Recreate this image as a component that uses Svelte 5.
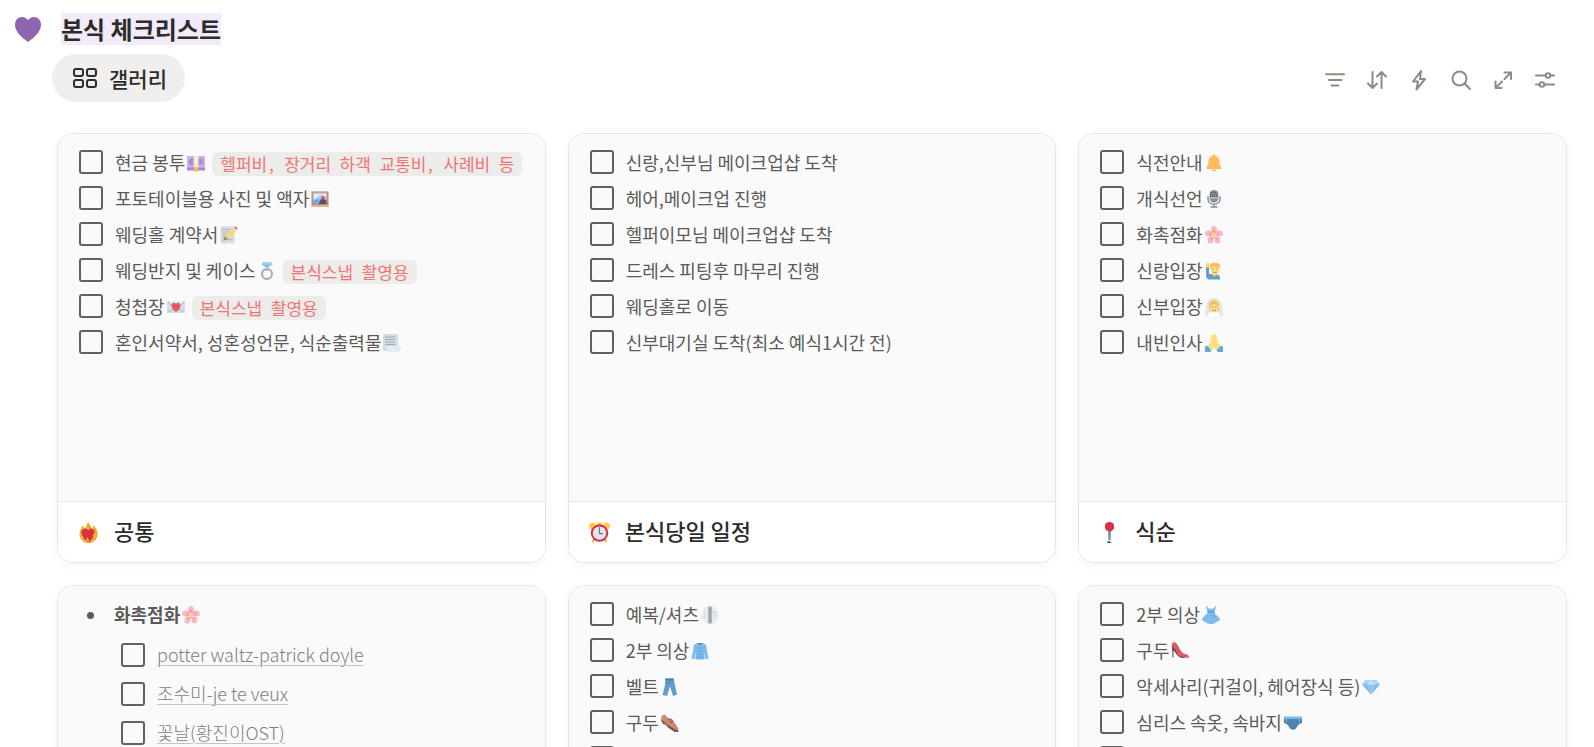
<script>
  const art = {
    pound: `<rect x="0" y="5" width="36" height="28" rx="1" fill="#9266cc"/><rect x="0" y="4" width="36" height="23" fill="#c1a3e6"/><path d="M3 7h30v17H3z" fill="#b894e2"/><circle cx="27" cy="15" r="6" fill="#9a74d0"/><path d="M11 11c-4-2-5 1-4 4l-1 5h6M5 15h6" fill="none" stroke="#7450a8" stroke-width="2"/><path d="M14 4h9v23h-9z" fill="#ffe8b6"/><path d="M14 27h9v8h-9z" fill="#ffac33"/>`,
    picture: `<path d="M1 3h34v30H1z" fill="#c1694f"/><path d="M5 7h26v21H5z" fill="#8cc9f5"/><path d="M5 7h26v6L20 10 9 16l-4 2z" fill="#d5ecfb"/><path d="M5 22l10-4 8 10H5z" fill="#3b88c3"/><path d="M13 28l10-14 8 8v6z" fill="#292f33"/><path d="M5 28l14-10-4 10z" fill="#5dade8"/><path d="M20 16l3-5 4 2 1 5-3 2z" fill="#dd2e44"/><path d="M1 3h34v2H1zM1 30h34v3H1z" fill="#d99e82"/>`,
    memo: `<rect x="1" y="1" width="28" height="34" rx="3" fill="#ccd6dd"/><path d="M5 7h16M5 12h13M5 17h10M5 22h8M5 27h20" stroke="#99aab5" stroke-width="2"/><path d="M7 29l3-9L27 3l6 6-17 17z" fill="#ffcc4d"/><path d="M10 20l6 6-10 4z" fill="#66757f"/><path d="M25 5l3-3 6 6-3 3z" fill="#ccd6dd"/><path d="M28 2c3-3 9 3 6 6z" fill="#dd2e44"/>`,
    ring: `<circle cx="18" cy="24" r="10" fill="none" stroke="#8899a6" stroke-width="4"/><path d="M13 15l5-2 5 2-5 3z" fill="#8899a6"/><path d="M11 0h14l4 5-11 7L7 5z" fill="#5dadec"/><path d="M11 0h14l4 5H7z" fill="#8ccaf7"/>`,
    letter: `<rect x="0" y="6" width="36" height="24" rx="3" fill="#ccd6dd"/><path d="M1 8l14 12L1 29M35 8L21 20l14 9" fill="none" stroke="#99aab5" stroke-width="2"/><path d="M2 6h32L18 20z" fill="#e1e8ed"/><path d="M18 28C13 25 9 20 9 15c0-6 7-7 9-3 2-4 9-3 9 3 0 5-4 10-9 13z" fill="#dd2e44"/>`,
    page: `<path d="M3 0h24c2 0 3 1 3 3v24H9v7H3c-2 0-3-1-3-3V3c0-2 1-3 3-3z" fill="#ccd6dd"/><path d="M4 6h20M4 11h20M4 16h20M4 21h20" stroke="#8899a6" stroke-width="2"/><path d="M10 24h22c5 0 5 6 2 8l-2 4H9c3-3-3-6-1-10z" fill="#e1e8ed"/>`,
    bell: `<path d="M18 1c2 0 3 1 3 3 6 1 8 6 8 11 0 9 4 10 4 13 0 1-1 2-2 2H5c-1 0-2-1-2-2 0-3 4-4 4-13 0-5 2-10 8-11 0-2 1-3 3-3zM14 31h8a4 4 0 0 1-8 0z" fill="#ffac33"/>`,
    mic: `<path d="M6 13v5c0 14 24 14 24 0v-5M18 28v6M11 34h14" fill="none" stroke="#66757f" stroke-width="3"/><rect x="9" y="0" width="18" height="25" rx="9" fill="#66757f"/><path d="M12 5h12M10 9h16M10 13h16" stroke="#292f33" stroke-width="2" stroke-dasharray="2 2"/><path d="M9 16h18" stroke="#ccd6dd" stroke-width="2"/>`,
    blossom: `<g fill="#f4abba"><ellipse cx="18" cy="8" rx="6" ry="8"/><ellipse cx="28" cy="15" rx="8" ry="6"/><ellipse cx="25" cy="28" rx="6" ry="7"/><ellipse cx="11" cy="28" rx="6" ry="7"/><ellipse cx="8" cy="15" rx="8" ry="6"/></g><path d="M18 18V8M18 18l9-3M18 18l6 8M18 18l-6 8M18 18L9 15" stroke="#ea596e" stroke-width="3"/><circle cx="18" cy="18" r="6" fill="#ea596e"/><path d="M18 11l2 4 5 0-3 4 2 5-6-2-6 2 2-5-3-4 5 0z" fill="#fff"/><circle cx="18" cy="18" r="4" fill="#ffcc4d"/>`,
    groom: `<path d="M2 10h6v13c4 3 22-2 22 9v3H9c-5 0-7-4-7-9z" fill="#3b88c3"/><path d="M1 4l4-3 4 2v8H2z" fill="#ffcc4d"/><path d="M15 22h8v5c-2 3-6 3-8 0z" fill="#e8a93f"/><ellipse cx="20" cy="15" rx="9" ry="11" fill="#ffdc5d"/><path d="M10 15C8 5 14 0 22 2c8-1 10 7 8 13l-2-5c-5 0-9-1-11-3-2 4-5 3-7 8z" fill="#ffac33"/><path d="M16 13v2M24 13v2" stroke="#662113" stroke-width="2"/><path d="M16 20q4 3 8 0" fill="none" stroke="#c1694f" stroke-width="2"/>`,
    bride: `<path d="M18 0C4 0 2 12 2 22L0 36h36l-2-14C34 12 32 0 18 0z" fill="#dde3e8"/><path d="M6 36c0-8 6-8 12-8s12 0 12 8z" fill="#fff"/><path d="M8 25V14c0-12 20-12 20 0v11z" fill="#ffac33"/><ellipse cx="18" cy="19" rx="8.500" ry="10" fill="#ffdc5d"/><path d="M9 15C10 4 26 4 27 15c-4-1-7-2-9-4-2 2-5 3-9 4z" fill="#ffac33"/><path d="M14 17v2M22 17v2" stroke="#662113" stroke-width="2"/><path d="M14 24q4 3 8 0" fill="none" stroke="#c1694f" stroke-width="2"/>`,
    pray: `<path d="M0 25l7-2 7 9-4 4H0zM36 25l-7-2-7 9 4 4h10z" fill="#3b94d9"/><path d="M18 1c-4-2-5 1-6 5l-1 10-6 8 8 9 5-6 5 6 8-9-6-8-1-10c-1-4-2-7-6-5z" fill="#ffdc5d"/><path d="M18 4v22" stroke="#e8b94f" stroke-width="1"/>`,
    labcoat: `<path d="M11 1h14l6 5 5 17-4 4-3-3v11H7V24l-3 3-4-4L5 6z" fill="#e1e8ed"/><path d="M14 1h8v34h-8z" fill="#99aab5"/><path d="M18 3v31" stroke="#66757f" stroke-width="2"/><path d="M7 10v16M29 10v16" stroke="#ccd6dd" stroke-width="2"/><path d="M24 12h2v2h-2z" fill="#dd2e44"/>`,
    coat: `<path d="M12 2h12l6 4 5 28h-6l-2-15v16H9V19L7 34H1L6 6z" fill="#5dadec"/><path d="M12 2h12l-6 4z" fill="#226699"/><path d="M18 7v28M9 12h18M9 18h18M9 24h18M9 30h18" stroke="#3b88c3" stroke-width="1"/>`,
    jeans: `<path d="M9 1h16l3 14 4 18-8 3-6-19-6 19-9-2L8 14z" fill="#3b88c3"/><path d="M9 1h16l1 4H8z" fill="#226699"/><path d="M17 5v8M11 7v4h4" fill="none" stroke="#1b5482" stroke-width="1"/>`,
    shoe: `<path d="M1 4l6-3 8 8 8 3 10 14c3 5 2 8-2 7L14 23 1 12z" fill="#c96a4a"/><path d="M0 10l14 12 17 10 4 1v3h-8l-13-9-7-8v4l-6-8z" fill="#50322a"/><path d="M14 11l7-1 3 6-6 2M16 8l5 9" fill="none" stroke="#50322a" stroke-width="1.500"/>`,
    dress: `<path d="M10 0l2 4 6 2 6-2 2-4 2 2-3 10c0 5 11 10 11 15 0 2-5 4-8 6-6 4-14 4-20 0-3-2-8-4-8-6 0-5 11-10 11-15L8 2z" fill="#5dadec"/><path d="M11 12h14" stroke="#2a75ae" stroke-width="2"/><path d="M12 19l-2 4M18 17v5M24 19l2 4" stroke="#2a75ae" stroke-width="1"/>`,
    heel: `<path d="M4 1c4-1 6 0 9 5 4 7 7 14 12 17 5 1 10 2 11 7H22C14 28 12 17 4 14 0 10 1 4 4 1z" fill="#dd2e44"/><path d="M2 9c7 3 9 13 15 18 4 3 8 4 19 4v1H21C12 29 9 20 5 17v14H3z" fill="#4b1c25"/>`,
    gem: `<path d="M8 4h20l8 9-18 20L0 13z" fill="#5dadec"/><path d="M8 4L0 13h36l-8-9z" fill="#8ccaf7"/><path d="M10 13l8 20 8-20-8-9z" fill="#bddef4"/><path d="M10 13h16l-8 20z" fill="#78b9eb"/>`,
    brief: `<path d="M0 6h36v12c-6 1-9 5-12 11-2 3-10 3-12 0C9 23 6 19 0 18z" fill="#226699"/><path d="M0 5h36v5H0z" fill="#55acee"/><path d="M5 10v7M31 10v7" stroke="#55acee" stroke-width="2"/>`,
    fireheart: `<path d="M15 36C6 33 1 25 3 17c1-4 3-5 4-10 3 1 4 3 4 6C15 9 14 4 18 0c0 5 6 7 6 13 2-2 3-5 2-8 5 4 9 12 7 20-2 6-7 10-12 11z" fill="#f4a520"/><path d="M13 6c-1 6 1 8-2 11l-4-2-2 10 9 9h8l7-12-3-8-3 4c-1-5-6-7-10-12z" fill="#ffcc4d"/><path d="M18 35C11 31 6 24 6 18c0-8 9-9 12-4 3-5 10-4 10 4 0 7-4 13-10 17z" fill="#dd2e44"/><path d="M27 20c-4 4 2 7-4 13 7-3 10-9 7-14zM14 33c2-2-1-4 2-7 2 3 4 5 2 9z" fill="#ffac33"/>`,
    clock: `<path d="M9 29l-3 6M27 29l3 6" stroke="#ffac33" stroke-width="3"/><circle cx="6" cy="7" r="6" fill="#ffcc4d"/><circle cx="30" cy="7" r="6" fill="#ffcc4d"/><path d="M14 1h8v5h-8z" fill="#ffcc4d"/><circle cx="18" cy="19" r="15" fill="#dd2e44"/><circle cx="18" cy="19" r="11.500" fill="#e1e8ed"/><path d="M18 9v11h6" fill="none" stroke="#66757f" stroke-width="2"/>`,
    pin: `<path d="M15 14h6l-1 16-2 4-2-4z" fill="#8899a6"/><circle cx="18" cy="8" r="8" fill="#dd2e44"/><path d="M14 34q1-2 4 0t4 0l-1 2h-6z" fill="#292f33"/>`
  };

  const cards = [
    {
      title: '공통', icon: 'fireheart',
      items: [
        { text: '현금 봉투', icon: 'pound', code: '헬퍼비, 장거리 하객 교통비, 사례비 등' },
        { text: '포토테이블용 사진 및 액자', icon: 'picture' },
        { text: '웨딩홀 계약서', icon: 'memo' },
        { text: '웨딩반지 및 케이스', icon: 'ring', code: '본식스냅 촬영용' },
        { text: '청첩장', icon: 'letter', code: '본식스냅 촬영용' },
        { text: '혼인서약서, 성혼성언문, 식순출력물', icon: 'page' }
      ]
    },
    {
      title: '본식당일 일정', icon: 'clock',
      items: [
        { text: '신랑,신부님 메이크업샵 도착' },
        { text: '헤어,메이크업 진행' },
        { text: '헬퍼이모님 메이크업샵 도착' },
        { text: '드레스 피팅후 마무리 진행' },
        { text: '웨딩홀로 이동' },
        { text: '신부대기실 도착(최소 예식1시간 전)' }
      ]
    },
    {
      title: '식순', icon: 'pin',
      items: [
        { text: '식전안내', icon: 'bell' },
        { text: '개식선언', icon: 'mic' },
        { text: '화촉점화', icon: 'blossom' },
        { text: '신랑입장', icon: 'groom' },
        { text: '신부입장', icon: 'bride' },
        { text: '내빈인사', icon: 'pray' }
      ]
    },
    {
      heading: { text: '화촉점화', icon: 'blossom' },
      links: ['potter waltz-patrick doyle', '조수미-je te veux', '꽃날(황진이OST)']
    },
    {
      items: [
        { text: '예복/셔츠', icon: 'labcoat' },
        { text: '2부 의상', icon: 'coat' },
        { text: '벨트', icon: 'jeans' },
        { text: '구두', icon: 'shoe' },
        { text: '' }
      ]
    },
    {
      items: [
        { text: '2부 의상', icon: 'dress' },
        { text: '구두', icon: 'heel' },
        { text: '악세사리(귀걸이, 헤어장식 등)', icon: 'gem' },
        { text: '심리스 속옷, 속바지', icon: 'brief' },
        { text: '' }
      ]
    }
  ];

  const tools = [
    `<path d="M3 6.200h18M6 12h12.500M8.500 17.500h7"/>`,
    `<path d="M7.500 4v16M3 15.500l4.500 4.500 4.500-4.500M16.500 20V4M12 8.500L16.500 4l4.500 4.500"/>`,
    `<path d="M14 3L6 13.500h5l-1.500 8L18 11h-5z"/>`,
    `<circle cx="10.500" cy="10.500" r="7"/><path d="M15.800 15.800l5.200 5.200"/>`,
    `<path d="M13.500 4.500h6.500v6.500M20 4.500l-6.500 6.500M10.500 20H4.500v-6.500M4.500 20l6.500-6.500"/>`,
    `<path d="M3 7.500h9.500M17.500 7.500H21M3 16.500h3.500M11.500 16.500H21"/><circle cx="15" cy="7.500" r="2.300"/><circle cx="9" cy="16.500" r="2.300"/>`
  ];
  const toolNames = ['필터', '정렬', '자동화', '검색', '확대', '설정'];
</script>

{#snippet emoji(name)}
  <svg class="emoji" viewBox="0 0 36 36" aria-hidden="true">{@html art[name]}</svg>
{/snippet}

<main>
  <header>
    <svg class="heart" viewBox="0 0 26 25" aria-hidden="true">
      <path d="M13 25C6 20 0 14.500 0 7.500 0 3 3.200 0 7 0c2.700 0 4.900 1.300 6 3.300C14.100 1.300 16.300 0 19 0c3.800 0 7 3 7 7.500C26 14.500 20 20 13 25z" fill="#9065b0" />
    </svg>
    <h1><mark>본식 체크리스트</mark></h1>
  </header>

  <nav>
    <button class="tab">
      <svg viewBox="0 0 24 20" aria-hidden="true">
        <g fill="none" stroke="#2c2c2b" stroke-width="2">
          <rect x="1" y="1" width="9" height="7" rx="2" /><rect x="14" y="1" width="9" height="7" rx="2" />
          <rect x="1" y="12" width="9" height="7" rx="2" /><rect x="14" y="12" width="9" height="7" rx="2" />
        </g>
      </svg>
      갤러리
    </button>
    <div class="tools">
      {#each tools as tool, i}
        <button aria-label={toolNames[i]}><svg viewBox="0 0 24 24">{@html tool}</svg></button>
      {/each}
    </div>
  </nav>

  <section class="gallery">
    {#each cards as card}
      <article>
        <div class="preview">
          {#if card.heading}
            <p class="bullet"><i></i><b>{card.heading.text}</b>{@render emoji(card.heading.icon)}</p>
            <ul class="nested">
              {#each card.links as link}
                <li><input type="checkbox" aria-label={link} /><a href="#top">{link}</a></li>
              {/each}
            </ul>
          {:else}
            <ul>
              {#each card.items as item}
                <li>
                  <label>
                    <input type="checkbox" /><span>{item.text}</span>{#if item.icon}{@render emoji(item.icon)}{/if}{#if item.code}<code>{item.code}</code>{/if}
                  </label>
                </li>
              {/each}
            </ul>
          {/if}
        </div>
        {#if card.title}
          <footer>{@render emoji(card.icon)}<h2>{card.title}</h2></footer>
        {/if}
      </article>
    {/each}
  </section>
</main>

<style>
  :global(body) { margin: 0; background: #fff; }
  main {
    box-sizing: border-box;
    height: 100vh;
    overflow: hidden;
    padding: 13px 27px 0 15px;
    font-family: "Noto Sans CJK KR", "Noto Sans", sans-serif;
    color: #2c2c2b;
  }
  h1, h2, p, ul { margin: 0; padding: 0; }
  ul { list-style: none; }
  button { border: 0; padding: 0; background: none; font: inherit; color: inherit; cursor: pointer; }
  header { display: flex; align-items: center; gap: 20px; height: 32px; }
  .heart { width: 26px; height: 25px; }
  h1 { font-size: 24px; line-height: 32px; font-weight: 700; }
  mark { display: block; background: #f3ebfa; color: inherit; }
  nav {
    display: flex;
    align-items: center;
    justify-content: space-between;
    margin: 9px 0 0 37px;
  }
  .tab {
    display: flex;
    align-items: center;
    gap: 12px;
    height: 48px;
    padding: 0 18px 0 21px;
    border-radius: 24px;
    background: #f0efed;
    font-size: 21px;
    font-weight: 500;
    line-height: 32px;
  }
  .tab svg { width: 24px; height: 20px; }
  .tools { display: flex; gap: 18px; margin: 3px 10px 0 0; }
  .tools button { width: 24px; height: 24px; }
  .tools svg {
    display: block;
    width: 24px;
    height: 24px;
    fill: none;
    stroke: #8f8b82;
    stroke-width: 2;
    stroke-linecap: round;
    stroke-linejoin: round;
  }
  .gallery {
    display: grid;
    grid-template-columns: repeat(3, minmax(0, 1fr));
    gap: 22px;
    margin: 31px 0 0 42px;
  }
  article {
    border: 1px solid #e6e6e5;
    border-radius: 16px;
    overflow: hidden;
    box-shadow: 0 0 1px rgba(0, 0, 0, 0.08), 0 4px 12px rgba(0, 0, 0, 0.03);
  }
  .preview {
    box-sizing: border-box;
    height: 367px;
    padding: 10px 21px;
    overflow: hidden;
    background: #fafafa;
    color: #5a5a59;
    font-size: 18px;
    line-height: 36px;
    white-space: nowrap;
  }
  label, .nested li, .bullet { display: flex; align-items: center; height: 36px; }
  input {
    appearance: none;
    box-sizing: border-box;
    flex: none;
    width: 24px;
    height: 24px;
    margin: 0 12px 0 0;
    border: 2px solid #616160;
    border-radius: 3px;
  }
  .emoji { flex: none; width: 18px; height: 18px; margin: 2px 0 0 2px; }
  .preview .emoji { opacity: 0.8; }
  code {
    margin: 4px 0 0 7px;
    padding: 0 8px;
    border-radius: 6px;
    background: #ececea;
    color: #f07474;
    font-family: "Noto Sans Mono CJK KR", "Noto Sans CJK KR", monospace;
    font-size: 17px;
    font-weight: 300;
    line-height: 24px;
  }
  .bullet i { width: 7px; height: 7px; margin: 2px 20px 0 8px; border-radius: 50%; background: #5a5a59; }
  .nested { padding: 3px 0 0 42px; }
  .nested li { height: 39px; }
  .nested a {
    padding-bottom: 2px;
    color: #7e7e7d;
    font-weight: 300;
    text-decoration: underline;
    text-decoration-color: #c4c4c3;
    text-decoration-thickness: 1px;
    text-underline-offset: 3px;
  }
  footer {
    display: flex;
    align-items: center;
    gap: 15px;
    height: 60px;
    padding: 0 20px;
    border-top: 1px solid #e6e6e5;
    background: #fff;
  }
  footer .emoji { width: 21px; height: 21px; margin: 0; }
  h2 { padding-bottom: 4px; font-size: 22px; font-weight: 500; line-height: 32px; }
</style>
